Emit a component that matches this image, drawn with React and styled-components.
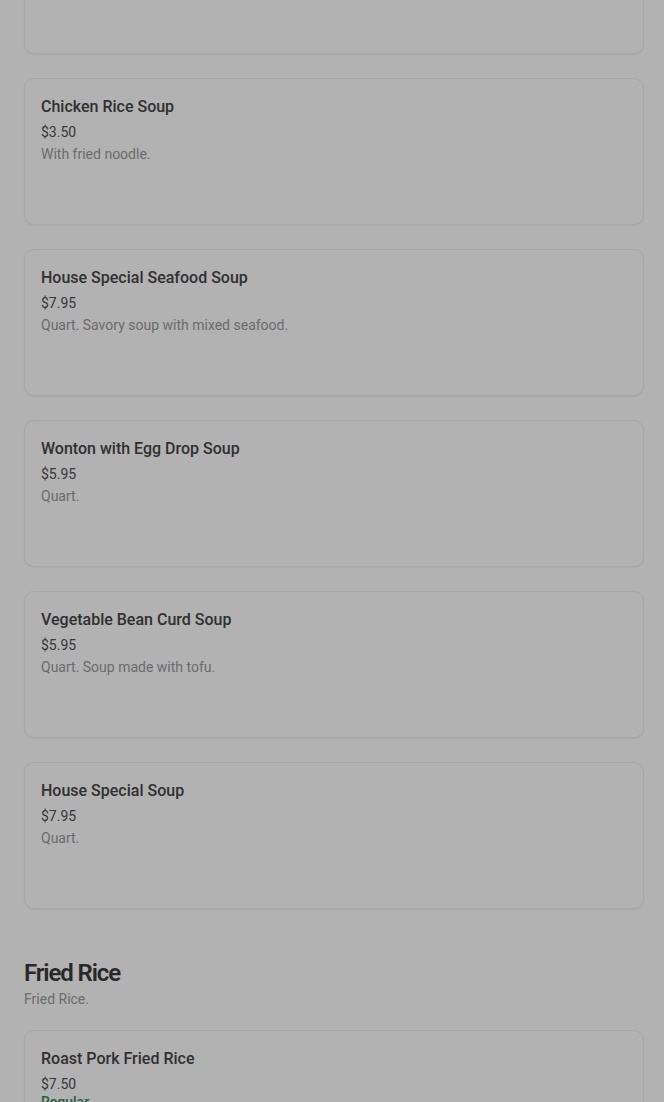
import React from "react";
import styled, { createGlobalStyle } from "styled-components";

const GlobalStyle = createGlobalStyle`
  html, body {
    margin: 0;
    padding: 0;
    background: #ffffff;
    font-family: Roboto, "Liberation Sans", Arial, sans-serif;
    overflow: hidden;
  }
`;

const Page = styled.div`
  padding: 0 20px 0 24px;
`;

const Section = styled.section`
  margin-top: ${(p) => p.$offset || 0}px;
  & + & {
    margin-top: 48px;
  }
`;

const SectionTitle = styled.h2`
  margin: 0;
  font-size: 24px;
  line-height: 32px;
  font-weight: 600;
  letter-spacing: -1.1px;
  color: #3a3a3a;
`;

const SectionNote = styled.p`
  margin: 0 0 21px;
  font-size: 14px;
  line-height: 20px;
  color: #9a9a9a;
`;

const List = styled.div`
  display: flex;
  flex-direction: column;
  gap: 24px;
`;

const Card = styled.div`
  box-sizing: border-box;
  min-height: 147px;
  padding: 16px;
  border: 1px solid #efefef;
  border-radius: 10px;
  background: #fff;
  box-shadow: 0 1px 2px rgba(0, 0, 0, 0.06);
`;

const ItemName = styled.div`
  font-size: 16px;
  line-height: 24px;
  font-weight: 500;
  color: #464646;
`;

const Price = styled.div`
  margin-top: 3px;
  font-size: 14px;
  line-height: 20px;
  color: #4f4f4f;
`;

const Desc = styled.div`
  margin-top: 2px;
  font-size: 14px;
  line-height: 20px;
  color: #9a9a9a;
`;

const Tag = styled.div`
  font-size: 14px;
  font-weight: 500;
  line-height: 16px;
  color: #2f8a5c;
`;

const Overlay = styled.div`
  position: fixed;
  inset: 0;
  background: rgba(0, 0, 0, 0.3);
`;

const soups = [
  { name: "", price: "", desc: "" },
  { name: "Chicken Rice Soup", price: "$3.50", desc: "With fried noodle." },
  { name: "House Special Seafood Soup", price: "$7.95", desc: "Quart. Savory soup with mixed seafood." },
  { name: "Wonton with Egg Drop Soup", price: "$5.95", desc: "Quart." },
  { name: "Vegetable Bean Curd Soup", price: "$5.95", desc: "Quart. Soup made with tofu." },
  { name: "House Special Soup", price: "$7.95", desc: "Quart." },
];

function MenuItem({ item }) {
  return (
    <Card>
      {item.name && <ItemName>{item.name}</ItemName>}
      {item.price && <Price>{item.price}</Price>}
      {item.desc && <Desc>{item.desc}</Desc>}
      {item.tag && <Tag>{item.tag}</Tag>}
    </Card>
  );
}

export default function App() {
  return (
    <>
      <GlobalStyle />
      <Page>
        <Section $offset={-93}>
          <List>
            {soups.map((s, i) => (
              <MenuItem key={i} item={s} />
            ))}
          </List>
        </Section>
        <Section>
          <SectionTitle>Fried Rice</SectionTitle>
          <SectionNote>Fried Rice.</SectionNote>
          <List>
            <MenuItem item={{ name: "Roast Pork Fried Rice", price: "$7.50", tag: "Regular" }} />
          </List>
        </Section>
      </Page>
      <Overlay />
    </>
  );
}
